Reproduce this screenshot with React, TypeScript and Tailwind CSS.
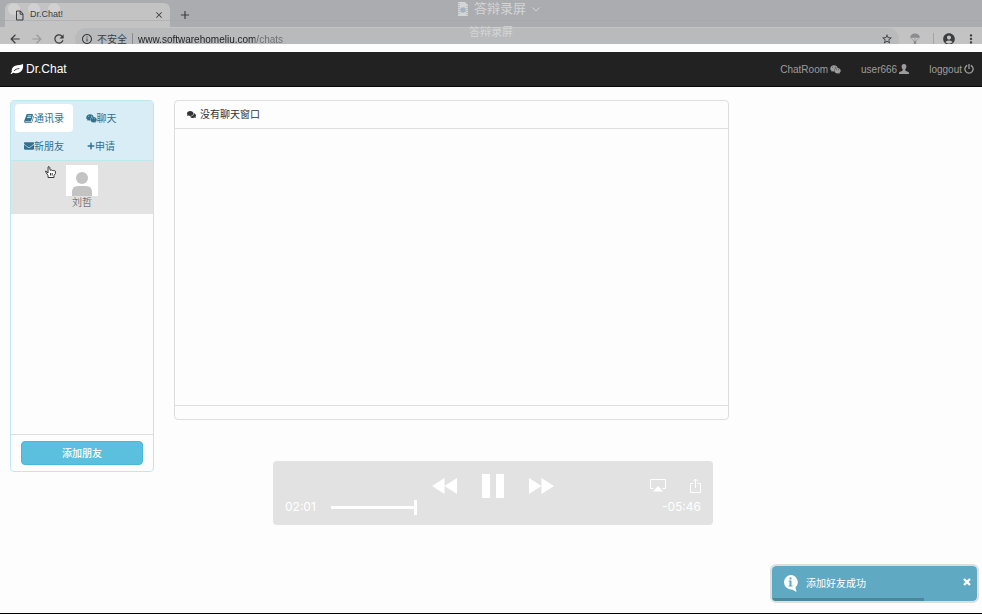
import { FaComments, FaEnvelope, FaPlus, FaWeixin } from "react-icons/fa";
import {
  MdAccountCircle,
  MdAdd,
  MdArrowBack,
  MdArrowForward,
  MdClose,
  MdInfoOutline,
  MdMoreVert,
  MdRefresh,
  MdStarBorder,
} from "react-icons/md";

function LeafIcon() {
  return (
    <svg viewBox="0 0 14 12" className="h-3 w-3.5" fill="currentColor" aria-hidden="true">
      <path d="M12.800 .8c.5 1.500.6 3.300-.3 5.400-1.400 3.100-4.200 4.300-7.200 4-.9-.1-1.500-.3-2.100-.5-.6.300-1 .7-1.400 1.300L.5 10.500c.3-.7.8-1.100 1.300-1.600C1.200 6.200 2.500 3.700 5.200 2.700 7.900 1.800 11 2.600 12.800.8z" />
      <path d="M4 8C5.200 6.400 6.900 5.800 9.300 5.600" fill="none" stroke="#222222" strokeWidth=".9" />
    </svg>
  );
}

function BookIcon() {
  return (
    <svg viewBox="0 0 1664 1536" className="h-[9px] w-2.5" fill="currentColor" aria-hidden="true">
      <path d="M1639 350q40 57 18 129l-275 906q-19 64-76.500 107.500T1183 1536H260q-77 0-148.500-53.500T12 1351q-24-67-2-127 0-4 3-27t4-37L340 283Q370 100 470 12q30-16 84-6h810q74 0 114 56t18 130l-274 906q-36 119-71.500 153.500T1023 1280H154q-27 0-38 15-11 16-1 43 24 70 144 70h923q29 0 56-15.500t35-41.500l300-987q7-22 5-57 38 15 59 43zM575 352q-4 32 22 32h608q30 0 42-32l21-64q4-32-22-32H638q-30 0-42 32zm-83 256q-4 32 22 32h608q30 0 42-32l21-64q4-32-22-32H555q-30 0-42 32z" />
    </svg>
  );
}

function PersonIcon() {
  return (
    <svg viewBox="0 0 10 10" className="size-2.5" fill="currentColor" aria-hidden="true">
      <path d="M5 0c1.700 0 2.500 1.200 2.400 2.700C7.300 4 6.800 4.800 6.200 5.300c-.1.900.1 1.300.8 1.600C8.600 7.600 9.800 7.700 10 8.800V10H0V8.800C.2 7.700 1.400 7.600 3 6.900c.7-.3.900-.7.8-1.600C3.200 4.800 2.700 4 2.600 2.700 2.500 1.200 3.300 0 5 0z" />
    </svg>
  );
}

function PowerIcon() {
  return (
    <svg viewBox="0 0 10 10" className="size-2.5" fill="none" stroke="currentColor" strokeWidth="1.300" aria-hidden="true">
      <path d="M3.200 1.300a4.100 4.100 0 1 0 3.600 0M5 0v5" />
    </svg>
  );
}

function BrowserChrome() {
  return (
    <header className="relative h-11 overflow-hidden bg-[#abacaf] text-[#3c3d3f]">
      <div className="flex h-[27px] items-end pl-[5px]">
        <div className="flex h-6 w-[165px] items-center gap-1.5 rounded-t-md bg-[#c3c3c4] pr-1.5 pl-2.5">
          <svg viewBox="0 0 9 11" className="relative z-10 h-[11px] w-[9px]" fill="none" stroke="currentColor" aria-hidden="true">
            <path d="M1.500 1h4l2.500 3v6h-6.500zM5.200 1v3.200H8" />
          </svg>
          <span className="relative z-10 flex-1 text-[9px]">Dr.Chat!</span>
          <button type="button" aria-label="Close tab">
            <MdClose className="size-2.5" />
          </button>
        </div>
        <button type="button" aria-label="New tab" className="ml-2 flex h-6 items-center">
          <MdAdd className="size-3.5" />
        </button>
      </div>
      <div className="flex h-6 items-start bg-[#c3c3c4] pr-1 pl-2">
        <nav className="flex h-6 w-[67px] items-center gap-2" aria-label="History">
          <button type="button" aria-label="Back">
            <MdArrowBack className="size-3.5" />
          </button>
          <button type="button" aria-label="Forward" className="text-[#98999b]">
            <MdArrowForward className="size-3.5" />
          </button>
          <button type="button" aria-label="Reload">
            <MdRefresh className="size-3.5" />
          </button>
        </nav>
        <div className="mt-px flex h-[22px] min-w-0 flex-1 items-center rounded-full bg-[#b9babb] pr-1.5 pl-1.5">
          <MdInfoOutline className="size-3" />
          <span className="ml-1 text-[10px]">不安全</span>
          <span className="mx-[5px] h-3 w-px bg-[#8b8c8e]" />
          <input
            aria-label="Address"
            type="text"
            readOnly
            value="www.softwarehomeliu.com/chats"
            className="min-w-0 flex-1 bg-[linear-gradient(90deg,#1f2021_117px,#6c6d6f_117px)] bg-clip-text text-[10px] text-transparent outline-none"
          />
          <button type="button" aria-label="Bookmark">
            <MdStarBorder className="size-3" />
          </button>
        </div>
        <div className="flex h-6 items-center pl-2.5">
          <svg viewBox="0 0 12 12" className="size-3 text-[#8b8c8e]" fill="currentColor" aria-hidden="true">
            <path d="M1 5a5 4.500 0 0 1 10 0L9.500 4.500 8 5 6 4.500 4 5 2.500 4.500z" />
            <path d="M2 5l3 3M10 5L7 8M6 5v3" fill="none" stroke="currentColor" strokeWidth=".6" />
            <path d="M4.800 8h2.400v3H4.800z" />
          </svg>
          <span className="mr-2 ml-3 h-3 w-px bg-[#a2a3a5]" />
          <button type="button" aria-label="Profile">
            <MdAccountCircle className="size-3.5" />
          </button>
          <button type="button" aria-label="Menu" className="ml-2">
            <MdMoreVert className="size-3.5" />
          </button>
        </div>
      </div>

      <div className="pointer-events-none absolute inset-0 flex flex-col items-center text-[#d4d5d6]">
        <div className="absolute top-[3px] left-2 flex gap-2">
          <span className="size-3 rounded-full bg-[#d4d4d5]/80" />
          <span className="size-3 rounded-full bg-[#d4d4d5]/80" />
          <span className="size-3 rounded-full bg-[#d4d4d5]/80" />
        </div>
        <div className="absolute top-5 h-px w-full bg-[#a2a3a6]/50" />
        <div className="flex h-[18px] items-center gap-1.5 pl-4">
          <svg viewBox="0 0 10 14" className="h-3.5 w-2.5" aria-hidden="true">
            <path d="M0 0h7l3 3v11H0z" fill="#d4d5d6" />
            <path d="M1 1v12M9 4v9" stroke="#a2a3a6" strokeDasharray="1 1" />
            <circle cx="5" cy="8" r="2.800" fill="#a5b3bf" />
          </svg>
          <span className="text-[13px]">答辩录屏</span>
          <svg viewBox="0 0 8 5" className="h-[5px] w-2" fill="none" stroke="currentColor" aria-hidden="true">
            <path d="M.5 .5L4 4 7.500 .5" />
          </svg>
        </div>
        <span className="mt-1.5 text-[11px]">答辩录屏</span>
      </div>
    </header>
  );
}

function Navbar() {
  return (
    <nav className="mt-2 flex h-[35px] items-center justify-between border-b border-[#080808] bg-[#222222] pr-2 pl-2.5">
      <a href="#home" className="flex items-center gap-0.5 text-[12px] text-white">
        <LeafIcon />
        Dr.Chat
      </a>
      <div className="flex items-center gap-5 text-[10px] text-[#9d9d9d]">
        <a href="#room" className="flex items-center gap-0.5">
          ChatRoom <FaWeixin className="size-[11px]" />
        </a>
        <a href="#user" className="flex items-center gap-0.5">
          user666 <PersonIcon />
        </a>
        <a href="#logout" className="flex items-center gap-0.5">
          loggout <PowerIcon />
        </a>
      </div>
    </nav>
  );
}

function ContactsPanel() {
  return (
    <aside className="flex h-[372px] flex-col rounded-sm border border-[#bce8f1]">
      <div className="grid grid-cols-[58px_54px] gap-x-px border-b border-[#bce8f1] bg-[#d9edf7] pt-[3px] pl-1 text-[10px] text-[#31708f]">
        <button type="button" className="flex h-7 items-center justify-center rounded-sm bg-white">
          <BookIcon />
          通讯录
        </button>
        <button type="button" className="flex h-7 items-center justify-center">
          <FaWeixin className="size-[11px]" />
          聊天
        </button>
        <button type="button" className="flex h-7 items-center justify-center">
          <FaEnvelope className="size-2.5" />
          新朋友
        </button>
        <button type="button" className="flex h-7 items-center justify-center">
          <FaPlus className="size-2" />
          申请
        </button>
      </div>
      <button
        type="button"
        className="flex h-[53px] cursor-pointer flex-col items-center bg-[#e2e2e2] pt-1 text-[10px] leading-[14px] text-[#777777]"
      >
        <svg viewBox="0 0 32 31" className="h-[31px] w-8 bg-white" fill="#c3c3c3" aria-hidden="true">
          <circle cx="16" cy="13" r="6" />
          <path d="M6 31v-4q0-6 6-6h8q6 0 6 6v4z" />
        </svg>
        刘哲
      </button>
      <div className="mt-auto border-t border-[#dddddd] px-2.5 pt-[6px] pb-[6px]">
        <button
          type="button"
          className="block h-6 w-full rounded-sm border border-[#46b8da] bg-[#5bc0de] text-[10px] font-medium text-white"
        >
          添加朋友
        </button>
      </div>
    </aside>
  );
}

function ChatPanel() {
  return (
    <section className="flex h-80 flex-col rounded-sm border border-[#dddddd]">
      <h1 className="flex h-7 items-center gap-1 border-b border-[#dddddd] pl-3 text-[10px] text-[#333333]">
        <FaComments className="size-[9px]" />
        没有聊天窗口
      </h1>
      <div className="flex-1" />
      <div className="h-3.5 border-t border-[#dddddd]" />
    </section>
  );
}

function VideoControls() {
  return (
    <div className="absolute top-[461px] left-[273px] h-16 w-[440px] rounded-sm bg-[#e2e2e2] px-3 text-white">
      <div className="grid h-[37px] grid-cols-[1fr_auto_1fr] items-end">
        <span />
        <div className="flex items-center gap-[25px]">
          <button type="button" aria-label="Rewind">
            <svg viewBox="0 0 25 16" className="h-4 w-[25px]" fill="currentColor">
              <path d="M0 8L12.500 0v16zM12.500 8L25 0v16z" />
            </svg>
          </button>
          <button type="button" aria-label="Pause">
            <svg viewBox="0 0 22 24" className="h-6 w-[22px]" fill="currentColor">
              <path d="M0 0h8v24H0zM14 0h8v24h-8z" />
            </svg>
          </button>
          <button type="button" aria-label="Fast forward">
            <svg viewBox="0 0 25 16" className="h-4 w-[25px]" fill="currentColor">
              <path d="M0 0l12.500 8L0 16zM12.500 0L25 8l-12.500 8z" />
            </svg>
          </button>
        </div>
        <div className="flex h-[26px] items-center justify-end gap-6">
          <button type="button" aria-label="AirPlay">
            <svg viewBox="0 0 16 13" className="h-[13px] w-4" fill="none" stroke="currentColor">
              <path d="M3.500 9.500h-3v-9h15v9h-3" />
              <path d="M3 12.500L8 7l5 5.500z" fill="currentColor" stroke="none" />
            </svg>
          </button>
          <button type="button" aria-label="Share">
            <svg viewBox="0 0 11 15" className="h-[15px] w-[11px]" fill="none" stroke="currentColor">
              <path d="M3.500 5.500h-3v9h10v-9h-3M5.500 10V1M3 3.500L5.500 1 8 3.500" />
            </svg>
          </button>
        </div>
      </div>
      <div className="flex h-[18px] items-center font-[Inter,sans-serif] text-[12px]">
        <span className="w-8">02:01</span>
        <input
          type="range"
          aria-label="Playback position"
          min={0}
          max={467}
          defaultValue={121}
          className="mr-1.5 ml-3.5 h-4 min-w-0 flex-1 appearance-none bg-[linear-gradient(90deg,white_26%,transparent_26%)] bg-size-[100%_3px] bg-center bg-no-repeat [&::-webkit-slider-thumb]:h-[15px] [&::-webkit-slider-thumb]:w-[3px] [&::-webkit-slider-thumb]:appearance-none [&::-webkit-slider-thumb]:bg-white"
        />
        <span className="text-right">-05:46</span>
      </div>
    </div>
  );
}

function Toast() {
  return (
    <div
      role="status"
      className="absolute right-[5px] bottom-3 flex h-[35px] w-[205px] items-center overflow-hidden rounded-sm bg-[#5fa9c3] pl-[11px] text-[10px] text-white outline-2 outline-[#dedede]"
    >
      <svg viewBox="0 0 15 17" className="h-[17px] w-[15px]" aria-hidden="true">
        <path d="M7.500 0a7.200 7.200 0 0 1 5 12.400L13.500 17 9 14.400A7.200 7.200 0 1 1 7.500 0z" fill="white" />
        <path d="M6.500 2.500h2v2h-2zM5.500 5.500h3v5h1v1h-4v-1h1v-4h-1z" fill="#5fa9c3" />
      </svg>
      <span className="ml-2 flex-1">添加好友成功</span>
      <button type="button" aria-label="Dismiss" className="mr-1.5 mb-1">
        <svg viewBox="0 0 8 8" className="size-2" fill="none" stroke="currentColor" strokeWidth="2.400">
          <path d="M1 1l6 6M7 1L1 7" />
        </svg>
      </button>
      <div className="absolute bottom-0 left-0 h-[3px] w-[152px] bg-[#4c879c]" />
    </div>
  );
}

function HandCursor() {
  return (
    <svg
      viewBox="0 0 11 12"
      className="pointer-events-none absolute top-[166px] left-[45px] h-3 w-[11px]"
      fill="white"
      stroke="#222222"
      strokeWidth=".9"
      aria-hidden="true"
    >
      <path d="M3 7L1.500 5.200Q.3 4.500.6 5.700L3 9.500v2h6v-2l1.400-2V5.200q-.6-1-1.500-.2Q8.300 3.800 7.200 4.500 6.500 3.600 5.200 4.200L4.600 1.200Q4-.2 3.100 1z" />
      <path d="M5.500 7v2.500M7.200 7v2.500" />
    </svg>
  );
}

export default function App() {
  return (
    <div className="relative min-h-screen border-b border-black bg-[#fdfdfd] font-['Liberation_Sans','Noto_Sans_CJK_SC',sans-serif]">
      <BrowserChrome />
      <Navbar />
      <main className="mt-[13px] grid grid-cols-[9rem_555fr_223fr] items-start gap-5 px-2.5">
        <ContactsPanel />
        <ChatPanel />
      </main>
      <VideoControls />
      <HandCursor />
      <Toast />
    </div>
  );
}
